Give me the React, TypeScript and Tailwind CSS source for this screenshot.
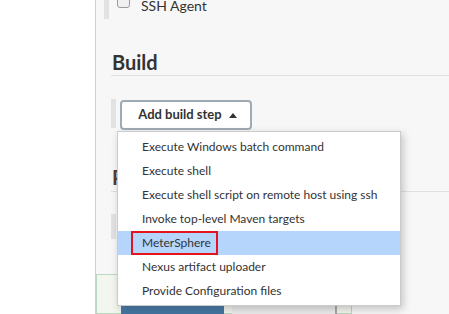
import React from 'react';

const steps = [
  'Execute Windows batch command',
  'Execute shell',
  'Execute shell script on remote host using ssh',
  'Invoke top-level Maven targets',
  'MeterSphere',
  'Nexus artifact uploader',
  'Provide Configuration files',
];

const App = () => {
  return (
    <div
      className="relative flex h-[314px] w-[449px] overflow-hidden bg-white text-[#333]"
      style={{ fontFamily: 'Lato, "Noto Sans", sans-serif' }}
    >
      <div className="w-[96px] shrink-0 border-r border-[#cfcfcf] bg-white" />

      <div className="flex flex-1 flex-col bg-[#f7f7f7]">
        {/* previous section tail */}
        <div className="flex h-[19px] items-start pl-[8px]">
          <div className="h-[19px] w-[5px] bg-[#e2e2e2]" />
          <div className="ml-[8px] -mt-[5px] h-[13px] w-[13px] rounded-[3px] border border-[#9b9b9b] bg-[#f0f0f0]" />
          <span className="ml-[11px] -mt-[4px] whitespace-nowrap text-[14px] leading-[19px]">SSH Agent</span>
        </div>

        <div className="ml-[15px] mt-[31px] border-b border-[#e0e0e0] pb-[1px] pl-[1px] text-[20px] font-bold leading-[24px]">
          Build
        </div>

        <div className="ml-[15px] mt-[23px] flex items-start">
          <div className="h-[29px] w-[5px] bg-[#e2e2e2]" />
          <button className="ml-[4px] mt-[1px] flex h-[30px] w-[132px] items-center justify-center gap-[7px] rounded-[4px] border-2 border-[#a0aab3] bg-white pl-[3px] text-[13px] font-bold text-[#333]">
            Add build step
            <svg width="8" height="5" viewBox="0 0 8 5">
              <path d="M0 5 L4 0 L8 5 Z" fill="#333" />
            </svg>
          </button>
        </div>

        <div className="ml-[15px] mt-[35px] whitespace-nowrap border-b border-[#e0e0e0] pb-[2px] pl-[1px] text-[20px] font-bold leading-[24px] text-[#5a3a30]">
          Post-build Actions
        </div>

        <div className="ml-[15px] mt-[22px] h-[32px] w-[5px] bg-[#e2e2e2]" />

        <div className="mt-[35px] flex h-[40px] w-[256px] items-start border border-[#b9d9c4] bg-[#f3f6ee] pl-[24px] pt-[22px]">
          <div className="h-[20px] w-[103px] rounded-t-[3px] bg-gradient-to-b from-[#5a8bb8] to-[#3f6f9a]" />
          <div className="ml-[8px] h-[20px] w-[105px] border-r-2 border-[#a9a9a9] bg-[#ececec]" />
        </div>
      </div>

      {/* open dropdown */}
      <ul className="absolute left-[117px] top-[131px] w-[284px] border border-[#cbcbcb] bg-white pb-[2px] pt-[3px] text-[12px] shadow-[2px_3px_8px_rgba(0,0,0,0.22)]">
        {steps.map((s) => (
          <li
            key={s}
            className={`relative flex h-[24px] items-center whitespace-nowrap pl-[24px] ${s === 'MeterSphere' ? 'bg-[#b5d5fd]' : ''}`}
          >
            {s}
            {s === 'MeterSphere' && (
              <span className="absolute left-[13px] top-0 h-[24px] w-[87px] border-2 border-[#e3141e]" />
            )}
          </li>
        ))}
      </ul>
    </div>
  );
};

export default App;
